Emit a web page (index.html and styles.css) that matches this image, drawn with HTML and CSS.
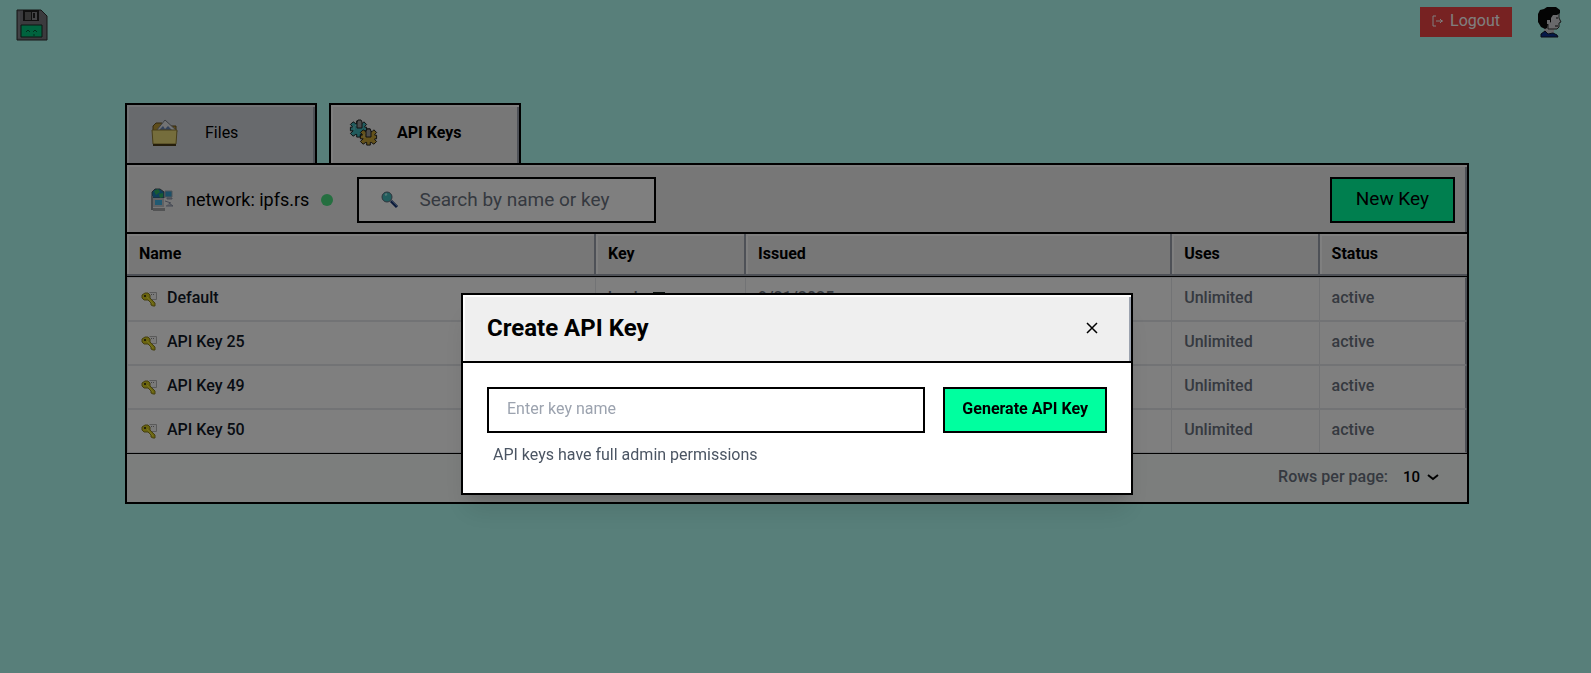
FILE: index.html
```html
<!DOCTYPE html>
<html lang="en">
<head>
	<meta charset="utf-8">
	<title>API Keys</title>
	<link rel="stylesheet" href="styles.css">
</head>
<body>
	<!-- shared icons -->
	<svg class="defs" width="0" height="0" aria-hidden="true">
		<symbol id="key" viewBox="0 0 16 16">
			<path d="M8.500 1.500h7v7h-6" fill="#f4f4f4" stroke="#b5b5b5"/>
			<path d="M10 3h1v1h-1zM12 3h1v1h-1z" fill="#888"/>
			<path d="M1 4l3-2h3l2 2v3l5 5v3h-2l-2-1v-2l-3-3-4 0-2-2z" fill="#d6cb1c" stroke="#8a7f22"/>
			<path d="M3 4h2v2H3z" fill="#4a4515"/>
			<path d="M6 6l6 7" stroke="#f0e64a"/>
		</symbol>
		<symbol id="gear" viewBox="0 0 20 20">
			<path d="M8 1h4v3h2l2-2 3 3-2 2v1h2v4h-2v1l2 2-3 3-3-2h-1v3H8v-3H7l-3 2-3-3 3-3H1V8h2V7L1 5l3-3 3 2h1z" stroke="#111" stroke-width="1"/>
			<path d="M6 6h5M5 7v4" fill="none" stroke="#fff" stroke-opacity=".4"/>
		</symbol>
	</svg>

	<header class="topbar">
		<a href="#" class="logo" aria-label="Home">
			<svg width="32" height="32" viewBox="0 0 32 32">
				<path d="M1 1h24l6 6v24H1z" fill="#77777c" stroke="#2c2c2e" stroke-width="1"/>
				<path d="M3 3v26" stroke="#929299" stroke-width="1"/>
				<path d="M7 1h16v11H7z" fill="#202020"/>
				<path d="M9 3h6v8H9z" fill="#696969"/>
				<path d="M16 3h5v8h-5z" fill="#88888c"/>
				<path d="M17 4h2v5h-2z" fill="#222"/>
				<path d="M5 16h21v12H5z" fill="#00c77d" stroke="#182a24" stroke-width="1"/>
				<path d="M10 23l2-2 2 2M17 23l2-2 2 2M18 25v2" fill="none" stroke="#075b3b" stroke-width="1"/>
			</svg>
		</a>
		<div class="account">
			<button class="logout" type="button">
				<svg width="12" height="12" viewBox="0 0 12 12" fill="none" stroke="currentColor"><path d="M4 1H1v10h3M4 6h7M8 4l2 2-2 2"/></svg>
				Logout
			</button>
			<svg class="avatar" width="28" height="32" viewBox="0 0 28 32" role="img" aria-label="Profile">
				<path d="M8 18h9v8H7z" fill="#cfcfd2"/>
				<path d="M11 6h11v5l2 4-2 1v4l-2 2h-9z" fill="#d3d3d6" stroke="#333" stroke-width="1"/>
				<path d="M7 2l3-2h9l4 3v3l-3 2h-4l-2 3v4l-3 2-1 4-2 1-4-2-3-5V7l2-4z" fill="#080808"/>
				<path d="M10 13h3v4h-3z" fill="#d3d3d6"/>
				<path d="M19 11h2M18 19h3" stroke="#111"/>
				<path d="M4 30v-3l4-3 3 3 5-1 4 2 1 2z" fill="#0a3390" stroke="#101828"/>
			</svg>
		</div>
	</header>

	<main class="container">
		<nav class="tabs">
			<a href="#" class="tab">
				<svg width="28" height="28" viewBox="0 0 28 28">
					<path d="M2 7l3-3h6l2 3h12v6H2z" fill="#bd9b38" stroke="#66501d"/>
					<path d="M5 12L14 1l12 11-3 7H6z" fill="#e4e6e9" stroke="#777b80"/>
					<path d="M9 10l3-3 2 3 3-3 5 5H8z" fill="#6784b5"/>
					<path d="M1 11h25l-1 14H2z" fill="#eadb78" stroke="#8e7b32"/>
					<path d="M2 26h23" stroke="#4b3c19" stroke-width="2"/>
				</svg>
				<span>Files</span>
			</a>
			<a href="#" class="tab active">
				<svg width="30" height="28" viewBox="0 0 30 28">
					<use href="#gear" y="1" width="19" height="18" fill="#42b6bb"/>
					<path d="M8 9V3l1-2h3l1 2v6z" fill="#999" stroke="#222"/>
					<use href="#gear" x="10" y="9" width="19" height="18" fill="#c8a437"/>
					<path d="M17 18v-6l1-2h3l1 2v6z" fill="#999" stroke="#222"/>
				</svg>
				<span>API Keys</span>
			</a>
		</nav>

		<section class="panel">
			<div class="toolbar">
				<div class="network">
					<svg width="24" height="24" viewBox="0 0 24 24">
						<path d="M2 4l3-3h5l4 3v6H2z" fill="#1c7fb5" stroke="#42535b"/>
						<path d="M4 3l4-2 2 3-4 3zM9 6l4-1v4l-3 1z" fill="#2fb765"/>
						<path d="M15 3h7v6h-7z" fill="#39a1d0" stroke="#9fa9b2"/>
						<path d="M4 11h9v7H4z" fill="#43b4e5" stroke="#c0c4c8" stroke-width="2"/>
						<path d="M1 8h2v14H1z" fill="#8b9197"/>
						<path d="M3 20h12v3H3z" fill="#a5a6a8"/>
						<path d="M17 10h5v1h-5zM15 13l6 2M16 18h7l-4-3" fill="#bec2cb" stroke="#8a93a8"/>
					</svg>
					<span>network: ipfs.rs</span>
					<i class="dot"></i>
				</div>
				<label class="search">
					<svg width="18" height="18" viewBox="0 0 18 18">
						<path d="M10 10l6 6" stroke="#163575" stroke-width="3"/>
						<path d="M11 10l5 5" stroke="#6386b8" stroke-width="1"/>
						<circle cx="6" cy="6" r="5" fill="#43babb" stroke="#596778"/>
						<path d="M4 4l2-1" stroke="#a7ebe9" stroke-width="2"/>
					</svg>
					<input type="text" placeholder="Search by name or key" aria-label="Search by name or key">
				</label>
				<button class="btn new-key" type="button">New Key</button>
			</div>

			<table>
				<colgroup>
					<col class="c-name"><col class="c-key"><col class="c-issued"><col class="c-uses"><col class="c-status">
				</colgroup>
				<thead>
					<tr><th>Name</th><th>Key</th><th>Issued</th><th>Uses</th><th>Status</th></tr>
				</thead>
				<tbody>
					<tr>
						<td class="name"><svg width="16" height="16"><use href="#key"/></svg>Default</td>
						<td class="hash">hash<svg width="12" height="14" viewBox="0 0 12 14" fill="none" stroke="#10201c" stroke-width="2"><path d="M0 1h11v9H1z"/></svg></td>
						<td>9/21/2025</td><td>Unlimited</td><td>active</td>
					</tr>
					<tr>
						<td class="name"><svg width="16" height="16"><use href="#key"/></svg>API Key 25</td>
						<td></td><td></td><td>Unlimited</td><td>active</td>
					</tr>
					<tr>
						<td class="name"><svg width="16" height="16"><use href="#key"/></svg>API Key 49</td>
						<td></td><td></td><td>Unlimited</td><td>active</td>
					</tr>
					<tr>
						<td class="name"><svg width="16" height="16"><use href="#key"/></svg>API Key 50</td>
						<td></td><td></td><td>Unlimited</td><td>active</td>
					</tr>
				</tbody>
			</table>

			<div class="pager">
				<label for="rows">Rows per page:</label>
				<span class="rows">
					<select id="rows"><option>10</option></select>
					<svg width="12" height="12" viewBox="0 0 12 12" fill="none" stroke="#000" stroke-width="2"><path d="M1 4l5 4 5-4"/></svg>
				</span>
			</div>
		</section>
	</main>

	<div class="overlay">
		<div class="modal" role="dialog" aria-modal="true" aria-labelledby="modal-title">
			<div class="modal-head">
				<h2 id="modal-title">Create API Key</h2>
				<button class="close" type="button" aria-label="Close">
					<svg width="12" height="12" viewBox="0 0 12 12" stroke="#000" stroke-width="1.5"><path d="M1 1l10 10M11 1L1 11"/></svg>
				</button>
			</div>
			<form class="modal-body">
				<div class="fields">
					<input type="text" placeholder="Enter key name" aria-label="Key name" aria-describedby="hint">
					<button class="btn generate" type="button">Generate API Key</button>
				</div>
				<p id="hint">API keys have full admin permissions</p>
			</form>
		</div>
	</div>
</body>
</html>
```
FILE: styles.css
```css
* {
	box-sizing: border-box;
}
body {
	margin: 0;
	min-height: 100vh;
	padding-left: 3px;
	background-color: #b0fff4;
	font-family: Roboto, "Liberation Sans", sans-serif;
	font-size: 16px;
	line-height: 24px;
	color: #000;
}
button, input, select {
	font: inherit;
	color: inherit;
	border-radius: 0;
}
a {
	color: inherit;
	text-decoration: none;
}
svg {
	display: block;
	flex: none;
}
.defs {
	position: absolute;
}

/* top bar */
.topbar {
	display: flex;
	justify-content: space-between;
	align-items: flex-start;
	height: 103px;
	padding: 7px 26px 0 13px;
}
.logo {
	padding-top: 2px;
}
.account {
	display: flex;
	gap: 25px;
}
.logout {
	display: flex;
	align-items: center;
	gap: 6px;
	height: 30px;
	padding: 0 12px 2px;
	border: 0;
	background: #ef4444;
	color: #fff;
}

/* tabs */
.container {
	max-width: 1344px;
	margin: 0 auto;
}
.tabs {
	display: flex;
	gap: 12px;
}
.tab {
	display: flex;
	align-items: center;
	gap: 26px;
	width: 192px;
	height: 60px;
	padding: 0 22px 2px 24px;
	border: 2px solid #000;
	border-bottom: 0;
	background: #d1d5db;
	box-shadow: inset 2px 2px #e5e7eb, inset -2px 0 #9ca3af;
}
.tab.active {
	padding-left: 18px;
	gap: 18px;
	background: #efefef;
	box-shadow: inset 2px 2px #fff, inset -2px 0 #9ca3af;
	font-weight: bold;
}

/* panel */
.panel {
	border: 2px solid #000;
	background: #fff;
}
.toolbar {
	display: flex;
	align-items: center;
	gap: 24px;
	padding: 12px 12px 9px 23px;
	border-bottom: 2px solid #000;
	background: #efefef;
	box-shadow: inset 2px 2px #fff, inset -2px 0 #9ca3af;
	font-size: 19px;
}
.network {
	display: flex;
	align-items: center;
	gap: 12px;
	font-size: 18px;
}
.dot {
	width: 12px;
	height: 12px;
	border-radius: 50%;
	background: #4ade80;
}
.search {
	display: flex;
	align-items: center;
	gap: 20px;
	width: 299px;
	height: 46px;
	padding: 0 12px 0 22px;
	border: 2px solid #000;
	background: #fff;
}
.search input {
	flex: 1;
	min-width: 0;
	padding: 0;
	border: 0;
	background: none;
}
.search input::placeholder {
	color: #6b7280;
	opacity: 1;
}
.btn {
	height: 46px;
	padding: 0 24px 2px;
	border: 2px solid #000;
	background: #00ff9f;
}
.new-key {
	margin-left: auto;
}

/* keys table */
table {
	width: 100%;
	table-layout: fixed;
	border-collapse: separate;
	border-spacing: 0;
}
.c-name { width: 35%; }
.c-key { width: 11.2%; }
.c-issued { width: 31.8%; }
.c-uses { width: 11%; }
.c-status { width: 11%; }
th {
	height: 43px;
	padding: 0 12px 2px;
	border-bottom: 1px solid #000;
	background: #efefef;
	box-shadow: inset -2px -2px #9ca3af, inset 2px 2px #fff;
	text-align: left;
}
th:last-child {
	box-shadow: inset 0 -2px #9ca3af, inset 2px 2px #fff;
}
td {
	height: 44px;
	padding: 0 11px 2px;
	border: 1px solid #e5e7eb;
	border-left: 0;
	color: #6b7280;
	font-weight: 500;
}
td + td {
	padding-left: 12px;
}
td:first-child {
	border-left: 1px solid #e5e7eb;
}
td:last-child {
	border-right: 2px solid #9ca3af;
}
.name {
	color: #111827;
}
.name svg {
	display: inline-block;
	margin: 0 10px 0 2px;
	vertical-align: middle;
}
.hash svg {
	display: inline-block;
	margin-left: 10px;
	vertical-align: middle;
}
.pager {
	display: flex;
	justify-content: flex-end;
	align-items: center;
	gap: 15px;
	height: 49px;
	padding: 0 28px 2px;
	border-top: 1px solid #000;
	background: #f8fdfb;
	color: #6b7280;
	font-weight: 500;
}
.rows {
	display: flex;
	align-items: center;
	gap: 6px;
	color: #000;
}
.rows select {
	appearance: none;
	padding: 0;
	border: 0;
	background: none;
	font-size: 15px;
}

/* modal */
.overlay {
	position: fixed;
	inset: 0;
	display: flex;
	justify-content: center;
	align-items: flex-start;
	padding: 293px 0 0 3px;
	background: rgba(0, 0, 0, 0.5);
}
.modal {
	width: 100%;
	max-width: 672px;
	border: 2px solid #000;
	background: #fff;
	box-shadow: 0 20px 25px -5px rgba(0, 0, 0, 0.1), 0 8px 10px -6px rgba(0, 0, 0, 0.1);
}
.modal-head {
	display: flex;
	justify-content: space-between;
	align-items: center;
	height: 68px;
	padding: 0 25px 0 24px;
	border-bottom: 2px solid #000;
	background: #efefef;
	box-shadow: inset 2px 2px #fff, inset -2px 0 #9ca3af;
}
.modal-head h2 {
	margin: 0;
	font-size: 24px;
	line-height: 32px;
}
.close {
	padding: 8px;
	border: 0;
	background: none;
}
.modal-body {
	padding: 24px 24px 26px;
}
.fields {
	display: flex;
	gap: 18px;
}
.fields input {
	flex: 1;
	min-width: 0;
	height: 46px;
	padding: 0 18px 4px;
	border: 2px solid #000;
}
.fields input::placeholder {
	color: #9ca3af;
	opacity: 1;
}
.generate {
	padding: 0 17px 2px;
	font-weight: bold;
}
.modal-body p {
	margin: 10px 6px 0;
	color: #4b5563;
}
```
